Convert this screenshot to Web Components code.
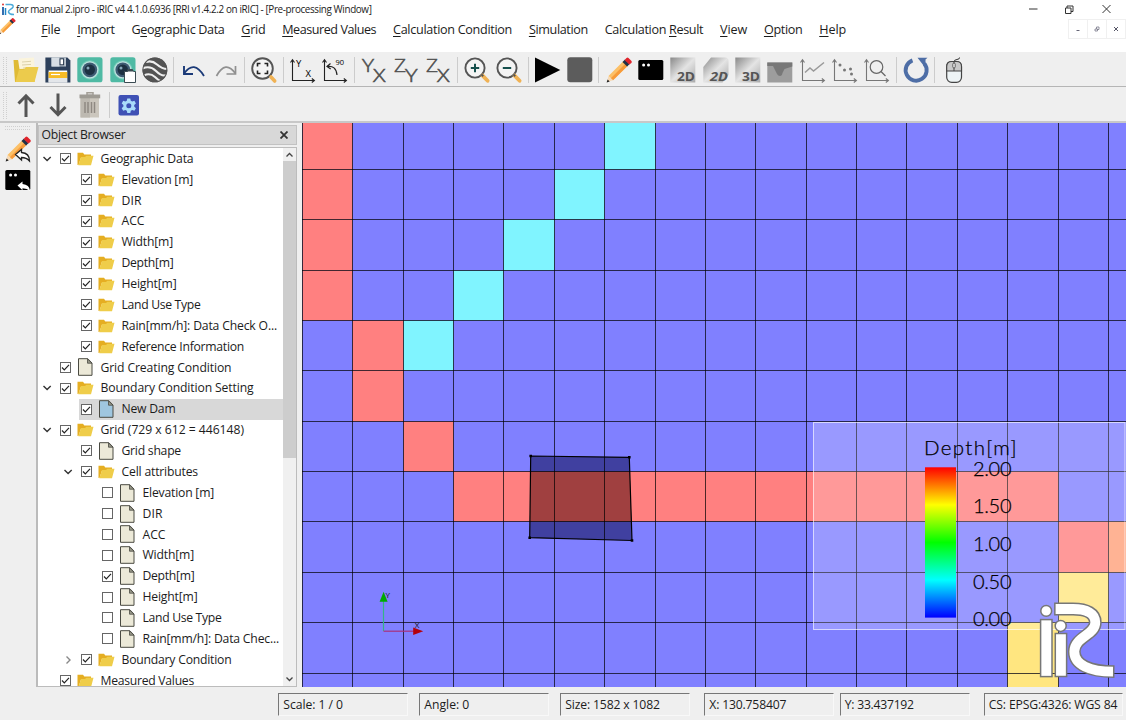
<!DOCTYPE html>
<html lang="en"><head><meta charset="utf-8"><title>iRIC</title>
<style>
html,body{margin:0;height:100%;overflow:hidden;background:#efefef}
body{font-family:"Open Sans","Noto Sans",sans-serif;font-size:12.4px;color:#1c1c1c}
</style></head><body>
<iric-app></iric-app>
<script>
const def=(name,html,extra)=>customElements.define(name,class extends HTMLElement{
  connectedCallback(){
    if(this.shadowRoot)return;
    const t=document.createElement('template');
    t.innerHTML=typeof html==='function'?html(this):html;
    this.attachShadow({mode:'open'}).appendChild(t.content.cloneNode(true));
    if(extra)extra(this);
  }});

/* A label that tracks its letters so that it fills the width given in "w". */
def('fit-text','<style>:host{display:inline-block;white-space:pre;line-height:1.3;flex:none}</style><slot></slot>',el=>{
  const w=+el.getAttribute('w'); if(!w)return;
  const n=el.textContent.length, nat=el.getBoundingClientRect().width;
  el.style.letterSpacing=((w-nat)/n)+'px';
});

const lens='<circle cx="11" cy="11" r="9.6" fill="#f4f4f4" stroke="#555" stroke-width="1.9"/>';
const handle='<path d="M18.6 18.6l5 5.2" stroke="#f0b254" stroke-width="3.8" stroke-linecap="round"/><path d="M17.4 17.4l1.8 1.8" stroke="#555" stroke-width="2"/>';
const axes='<path d="M2.5 3v20.5H24M.5 5.5l2-2.8 2 2.8M21.8 21.5l2.6 2-2.6 2" fill="none" stroke="#777" stroke-width="1.1"/>';
const axesD=axes.replace('#777','#222');
const cam='<rect x=".3" y=".3" width="25.2" height="25" rx="2.6" fill="#4fbaa4"/><circle cx="12.8" cy="12.8" r="9.6" fill="#74ccba"/><circle cx="12.8" cy="12.8" r="8.6" fill="#bfe3df"/><circle cx="12.8" cy="12.8" r="7.4" fill="#3e5b73"/><circle cx="12.8" cy="12.8" r="5.2" fill="#1d3142"/><circle cx="11" cy="11" r="1.5" fill="#88a9ba"/>';
const pencil='<path d="M2.5 19L17.5 4l4.5 4.4L7 23.3z" fill="#fcc067"/><path d="M4.8 21.2L19.8 6.2 22 8.4 7 23.3z" fill="#f79b3a"/><path d="M2.5 19L1 25l6-1.7z" fill="#f7d9b4"/><path d="M1.6 22.4L.6 25.5l3.1-.9z" fill="#222"/><path d="M16.5 5L19 2.5l4.6 4.6L21.1 9.500z" fill="#203247"/><path d="M18.6 3L20.500 1q1-.8 2 .1l3 3q.7 1-.1 2L23.300 7.600z" fill="#e0242b"/>';
const term='<rect x=".3" y="3" width="25" height="20" rx="1.5"/><circle cx="5.6" cy="7.900" r="1.500" fill="#fff"/><circle cx="10.500" cy="7.900" r="1.500" fill="#fff"/>';
const sheen=(shape)=>'<defs><linearGradient id="g" x1="0" y1="0" x2="1" y2="1"><stop offset="0" stop-color="#888"/><stop offset=".5" stop-color="#e4e4e4"/><stop offset="1" stop-color="#a9a9a9"/></linearGradient></defs><path d="'+shape+'" fill="url(#g)"/>';
const dim=(s,st='')=>'<text x="7" y="24" font-family="Open Sans" font-weight="700" font-size="11.500" textLength="18" lengthAdjust="spacingAndGlyphs" fill="#555" '+st+'>'+s+'</text>';
const yz=(a,b)=>'<g font-family="Open Sans" font-weight="300" fill="#444" stroke="#555" stroke-width=".5"><text x="1" y="14.500" font-size="18.500" textLength="12" lengthAdjust="spacingAndGlyphs">'+a+'</text><text x="12" y="24.500" font-size="18.500" textLength="12.500" lengthAdjust="spacingAndGlyphs">'+b+'</text></g>';
const ICON={
 open:'<path d="M3 4l14-3 2.500 15-15 4z" fill="#f6ebc8"/><path d="M6 1.500l15-1 1 17H6z" fill="#fbf4dc"/><path d="M9 5l9-.7M9 8l9-.6M10 11l5-.4" stroke="#d8cda5" stroke-width=".9"/><path d="M.5 3h4.500l1.500 9 17-.5-2 13.500H2z" fill="#dfba35"/><path d="M6 12.500h5l2-2.500h12.500L21.500 25H2.500z" fill="#eccb4c"/>',
 save:'<path d="M.4.5h22l3 3V25.400H.4z" fill="#2d405b"/><path d="M6.500.5h14.500v9H6.500z" fill="#b9c2cc"/><path d="M6.500.5h8v9h-8z" fill="#d7dde3"/><rect x="15" y="1.800" width="3.600" height="6" fill="#fff" stroke="#26364c"/><path d="M3.600 13.500h18.600v11.900H3.600z" fill="#fff"/><path d="M3.600 15h18.600v6H3.600z" fill="#f7bb26"/><path d="M6 17.500h9" stroke="#fff" stroke-width="1.200"/><path d="M3.600 21h18.600v4.400H3.600z" fill="#e3e6ea"/>',
 cam, camcopy:cam+'<path d="M14.500 14.500h3l1-2h4l1 2h2v11h-11z" fill="#fff" stroke="#3b4b52" stroke-width="1"/><path d="M17 12.500h6v2h-6z" fill="#3b4b52"/>',
 earth:'<circle cx="12.900" cy="12.900" r="12.400" fill="#545454"/><g fill="none" stroke="#efefef" stroke-width="2.100"><path d="M4 5Q10 3 15 7.500T25.500 12"/><path d="M.5 11.500Q8 8 14 14t10.500 4"/><path d="M2 18.500Q8 15.500 13 20t6 3.500"/></g><circle cx="12.900" cy="12.900" r="11.900" fill="none" stroke="#545454" stroke-width="1.100"/>',
 undo:'<path d="M3 16.500Q13 2.500 23 19" fill="none" stroke="#1b3a78" stroke-width="1.800"/><path d="M3 9v8h9" fill="none" stroke="#1b3a78" stroke-width="1.900"/>',
 redo:'<path d="M22.500 16.500Q12.500 2.500 3.500 19" fill="none" stroke="#909090" stroke-width="1.700"/><path d="M22.500 9v8h-9" fill="none" stroke="#909090" stroke-width="1.700"/>',
 fit:'<circle cx="11.500" cy="11.500" r="10.300" fill="#f4f4f4" stroke="#555" stroke-width="1.900"/><path d="M6.500 9.500V6.500h3M13.500 6.500h3v3M16.500 13.500v3h-3M9.500 16.500h-3v-3" fill="none" stroke="#222" stroke-width="1.600"/><path d="M20 20l3.700 4" stroke="#f0b254" stroke-width="3.600" stroke-linecap="round"/>',
 yx:axesD+'<g font-family="Open Sans" font-size="9.500"><text x="6" y="9.500">Y</text><text x="15.500" y="19.500">X</text></g>',
 r90:axesD+'<text x="13.500" y="8" font-family="Open Sans" font-size="7.500">90</text><path d="M5 9.500q9-1.500 10 8.500M8.500 6.500L5 9.500l3.700 2.600" fill="none" stroke="#222" stroke-width="1.200"/>',
 YX:yz('Y','X'),ZY:yz('Z','Y'),ZX:yz('Z','X'),
 zin:lens+'<path d="M11 6.800v8.400M6.800 11h8.400" stroke="#16504d" stroke-width="2"/>'+handle,
 zout:lens+'<path d="M6.800 11h8.400" stroke="#16504d" stroke-width="2"/>'+handle,
 play:'<path d="M0 .5L25.300 13 0 25.500z"/>',
 stop:'<rect x=".3" y=".3" width="25" height="25" rx="3" fill="#5c5c5c"/>',
 pencil,term,
 d2:sheen('M.3.5h25v25h-25z')+dim('2D'),
 d2b:sheen('M8 .5h14q3.500 0 3.500 3.500v14l-6 7.500H.3V10z')+dim('2D','font-style="italic"'),
 d3:sheen('M.3.5h25v25h-25z')+dim('3D'),
 section:'<path d="M.3 5.500h25v20h-25z" fill="#9d9d9d"/><path d="M2 9h4l4 8q1 2 3 2t2.500-3l2-4 7.800-2.500V5.500H.3V9z" fill="#787878"/>',
 line:axes+'<path d="M5 15.500l5-4.500 3.500 3L24 5.500" fill="none" stroke="#999" stroke-width="1.500"/>',
 dots:axes+'<g fill="#777"><circle cx="8" cy="8" r="1.500"/><circle cx="12.500" cy="13" r="1.500"/><circle cx="18.500" cy="12" r="1.500"/><circle cx="19.500" cy="17" r="1.500"/></g>',
 mag:axes+'<circle cx="12.500" cy="10" r="6.300" fill="none" stroke="#666" stroke-width="1.200"/><path d="M17 14.500l4.500 4.500" stroke="#666" stroke-width="1.300"/>',
 refresh:'<path d="M9.500 3.300A10.500 10.500 0 1 0 21.300 6.500" fill="none" stroke="#4e6ea6" stroke-width="3.900"/><path d="M14.500.8h10l-2 1.800v8.500z" fill="#4e6ea6"/>',
 mouse:'<path d="M13 4.500Q13 3 16 2.500T18.500.5" fill="none" stroke="#333"/><rect x="5.700" y="4.500" width="14.800" height="20.800" rx="5" fill="#eef4f6" stroke="#444" stroke-width="1.200"/><path d="M5.700 14V9.500q0-5 5-5h5q4.800 0 4.800 5V14z" fill="#c9c9c9" stroke="#444" stroke-width="1.100"/><path d="M13 4.500V14" stroke="#444"/><rect x="11.800" y="6" width="2.400" height="5" rx="1.200" fill="#eee" stroke="#444" stroke-width=".8"/>',
 up:'<path d="M13 25V4M5.500 11.500L13 3.800l7.500 7.700" fill="none" stroke="#555" stroke-width="3"/>',
 down:'<path d="M13 1.500v21M5.500 15l7.500 7.700 7.500-7.700" fill="none" stroke="#555" stroke-width="3"/>',
 trash:'<path d="M10 .8h6v2.500h-6z" fill="none" stroke="#a39f97" stroke-width="1.500"/><path d="M3.500 6h18.500v19.500H3.500z" fill="#cbc6bd"/><path d="M3.500 6H13v19.500H3.500z" fill="#bdb9b1"/><path d="M2.500 2.500h20.700v3.800H2.500z" fill="#9e9b94"/><path d="M8 10v11M11 10v11M14.500 10v11M17.500 10v11" stroke="#8f8982" stroke-width="1.500"/>',
 gear:'<rect x="2.500" y="3" width="20.500" height="20.500" rx="2" fill="#3f51b5"/><path d="M11.300 6.500h3l.5 2.300 1.400.8 2.200-.8 1.500 2.600-1.700 1.600v1.600l1.700 1.600-1.500 2.500-2.200-.7-1.400.8-.5 2.200h-3l-.5-2.200-1.400-.8-2.200.7-1.500-2.500 1.700-1.600V13l-1.700-1.600 1.500-2.600 2.200.8 1.400-.8z" fill="#a9dcfa"/><circle cx="12.800" cy="13.700" r="2.500" fill="#3f51b5"/>',
 pencilback:pencil+'<path d="M10.500 18.500l6-5v3q8 .5 8 8.500-3-3.500-8-3.500v2.500z" fill="#fff" stroke="#222" stroke-width="1.300"/>',
 termback:term+'<path d="M12.500 18.500l5-4v2.500q7 .5 7.500 7-3-2.700-7.500-2.700v2z" fill="#fff"/>'
};
def('tool-icon',el=>`<style>:host{display:block;flex:none;width:32.35px;height:26px}svg{display:block;overflow:visible}</style><svg width="26" height="26" viewBox="0 0 26 26">${ICON[el.getAttribute('name')]}</svg>`);

def('tool-bar',el=>`<style>:host{display:flex;align-items:flex-start;box-sizing:border-box;padding-left:3px;background:#efefef}
i{flex:none;width:5.150px;height:26px;margin-left:-1px;margin-right:1px;border-left:1px solid #ccc}
b{flex:none;width:2px;height:27px;margin-right:5.700px;border:dotted #cfcfcf;border-width:0 1px}</style><b></b>`+
 el.getAttribute('items').split(' ').map(n=>n==='|'?'<i></i>':`<tool-icon name="${n}"></tool-icon>`).join(''));

def('title-bar',`<style>:host{display:flex;height:19px;background:#fff;align-items:center;font-size:9.900px;padding-left:2px;color:#222}
svg{flex:none}.logo{margin-right:2px}.win{margin-left:auto;margin-right:14px}</style>
<svg class="logo" width="12" height="13" viewBox="0 0 12 13"><path d="M1 4v8" stroke="#1e5fa8" stroke-width="1.800"/><circle cx="1" cy="1.500" r="1" fill="#d33"/><path d="M3.500 5v7" stroke="#1d86c8" stroke-width="1.500"/><path d="M3.500 1.500h5q3 0 2.500 2.500c-.5 2-5 2.500-4.500 5q.5 2.500 5.500 2.500" fill="none" stroke="#4aa9d8" stroke-width="1.500"/></svg>
<fit-text w="355.500">for manual 2.ipro - iRIC v4 4.1.0.6936 [RRI v1.4.2.2 on iRIC] - [Pre-processing Window]</fit-text>
<svg class="win" width="83" height="10" viewBox="0 0 83 10" fill="none" stroke="#333" stroke-width="1"><path d="M0 4h8.500M36.500 3H42v5.500h-5.500zM38 3V1h6v5.500h-2M73.500 0l8 8M81.500 0l-8 8"/></svg>`);

def('menu-bar',el=>{
 const m=[['<u>F</u>ile',19],['<u>I</u>mport',37.500],['G<u>e</u>ographic Data',93],['<u>G</u>rid',24],['<u>M</u>easured Values',94],['<u>C</u>alculation Condition',119],['<u>S</u>imulation',59],['Calculation <u>R</u>esult',98.500],['<u>V</u>iew',27],['<u>O</u>ption',38.500],['<u>H</u>elp',27]];
 return `<style>:host{display:flex;height:33px;background:#fff}
 .items{display:flex;gap:16.850px;margin-left:24.300px;padding-top:3px;font-size:12.600px}u{text-underline-offset:2px;text-decoration-thickness:1px}
 svg{flex:none}.mdi{display:flex;margin-left:auto;height:20px}.mdi span{width:18px;height:18px;border:1px solid #f0f0f0;margin-left:-1px;display:grid;place-items:center}</style>
 <svg width="17" height="18" viewBox="0 9 26 26" overflow="visible"><g transform="translate(-2 6)">${pencil}</g></svg>
 <div class="items">${m.map(a=>`<fit-text w="${a[1]}">${a[0]}</fit-text>`).join('')}</div>
 <div class="mdi"><span><svg width="6" height="6"><path d="M1.500 4.500h3" stroke="#667"/></svg></span><span><svg width="6" height="6" fill="none" stroke="#778" stroke-width=".8"><path d="M1 3h2.500v2H1zM2.500 3V1H5v2.500H3.500"/></svg></span><span><svg width="6" height="6"><path d="M1 1l4 4M5 1L1 5" stroke="#556"/></svg></span></div>`;});

const folder='<svg width="17" height="14" viewBox="0 0 17 14"><path d="M.5.800h5.500l1.300 1.700H14v3H4L1.500 13H.5z" fill="#e5ae22"/><path d="M4 5h4l1.300-1.300H16.500L14 13.300H1.300z" fill="#efcd4a"/></svg>';
const page=c=>`<svg width="17" height="18" viewBox="0 0 17 18"><path d="M1.500.700h9.300L15 5v12.300H1.500z" fill="${c}" stroke="#4a4a42"/><path d="M10.500 1v4.200H15z" fill="#9b9b8c" stroke="#4a4a42" stroke-width=".8"/></svg>`;
/* One line of the object tree. Attributes: level, icon, w, open, checked, selected. */
def('tree-row',el=>{
 const l=+el.getAttribute('level'),ic=el.getAttribute('icon'),o=el.getAttribute('open');
 return `<style>:host{display:flex;align-items:center;flex:none;height:20.880px;padding-left:${3.6+21*l}px;box-sizing:border-box;font-size:12.200px;${el.hasAttribute('selected')?'background:linear-gradient(90deg,transparent 41px,#d8d8d8 41px)':''}}
 .a{width:19.400px;display:flex}.c{flex:none;width:9px;height:9px;border:1px solid #666;background:#fff;margin-right:6px}.c svg,.a svg,.i svg{display:block}.i{width:23px;flex:none;display:flex;align-items:center;height:18px}</style>
 <span class="a">${o?`<svg width="12" height="10" viewBox="0 0 12 10"><path d="${o==='y'?'M2.500 3l3.600 3.600L9.700 3':'M4.500 1.500L8 5 4.500 8.500'}" fill="none" stroke="${o==='y'?'#333':'#888'}" stroke-width="1.400"/></svg>`:''}</span>
 <span class="c">${el.hasAttribute('checked')?'<svg width="9" height="9"><path d="M1 4.500l2.300 2.300L8 1.800" fill="none" stroke="#222" stroke-width="1.200"/></svg>':''}</span>
 <span class="i">${ic==='f'?folder:page(ic==='b'?'#9fc6df':'#ece9d8')}</span><fit-text w="${el.getAttribute('w')}">${el.getAttribute('text')}</fit-text>`;});

def('object-browser',el=>{
 const R=[[0,'f','Geographic Data',93,'y',1],[1,'f','Elevation [m]',71.500,'',1],[1,'f','DIR',20,'',1],[1,'f','ACC',23,'',1],[1,'f','Width[m]',51.500,'',1],[1,'f','Depth[m]',52,'',1],[1,'f','Height[m]',55,'',1],[1,'f','Land Use Type',79,'',1],[1,'f','Rain[mm/h]: Data Check O...',155.500,'',1],[1,'f','Reference Information',122.500,'',1],[0,'p','Grid Creating Condition',131,'',1],[0,'f','Boundary Condition Setting',153,'y',1],[1,'b','New Dam',54,'',1,1],[0,'f','Grid (729 x 612 = 446148)',143.500,'y',1],[1,'p','Grid shape',59.500,'',1],[1,'f','Cell attributes',76.500,'y',1],[2,'p','Elevation [m]',71.500,'',0],[2,'p','DIR',20,'',0],[2,'p','ACC',23,'',0],[2,'p','Width[m]',51.500,'',0],[2,'p','Depth[m]',52,'',1],[2,'p','Height[m]',55,'',0],[2,'p','Land Use Type',79,'',0],[2,'p','Rain[mm/h]: Data Chec...',136.500,'',0],[1,'f','Boundary Condition',110,'n',1],[0,'f','Measured Values',93.500,'',1]];
 return `<style>:host{display:flex;flex-direction:column;width:261px;box-sizing:border-box;border-left:2px solid #bbb;font-size:12.200px}
 header{height:20px;margin-top:1.500px;box-sizing:border-box;display:flex;align-items:center;justify-content:space-between;background:#d8d8d8;border:1px solid #c2c2c2;padding:1.500px 8px 0 3px;color:#222}
 .box{flex:1;min-height:0;margin-top:2.500px;display:flex;background:#fff;border:1px solid #bcbcbc;border-left:0}
 .tree{flex:1;min-width:0;overflow:hidden;display:flex;flex-direction:column;padding-top:.3px}
 .bar{width:13px;background:#f0f0f0;display:flex;flex-direction:column;align-items:center}.bar svg{flex:none}.thumb{width:13px;height:297px;background:#cdcdcd;margin-bottom:auto}</style>
 <header><fit-text w="84">Object Browser</fit-text><svg width="8" height="8"><path d="M.5.5l7 7M7.500.5l-7 7" stroke="#333" stroke-width="1.800"/></svg></header>
 <div class="box"><div class="tree">${R.map(r=>`<tree-row level="${r[0]}" icon="${r[1]}" text="${r[2]}" w="${r[3]}" open="${r[4]}" ${r[5]?'checked':''} ${r[6]?'selected':''}></tree-row>`).join('')}</div>
 <div class="bar"><svg width="13" height="13"><path d="M3.500 8.500l3-3 3 3" fill="none" stroke="#444" stroke-width="1.300"/></svg><div class="thumb"></div><svg width="13" height="14"><path d="M3.500 5.500l3 3 3-3" fill="none" stroke="#444" stroke-width="1.300"/></svg></div></div>`;});

/* Map canvas: user units are window pixels, so the view box begins at the canvas corner. */
def('map-view',el=>{
 const snap=v=>Math.round(v-.5)+.5;
 const X=i=>snap(302.400+50.380*i),Y=j=>snap(119+50.370*j);
 let cells='',lines='';
 const put=(c,r,f,n=1)=>cells+=`<rect x="${X(c)}" y="${Y(r)}" width="${X(c+n)-X(c)}" height="${Y(r+1)-Y(r)}" fill="${f}"/>`;
 const red='#ff8080',cy='#80f4ff',ye='#ffe680';
 for(let r=0;r<4;r++)put(0,r,red);
 put(1,4,red);put(1,5,red);put(2,6,red);put(3,7,red,12);put(15,8,red);put(16,8,'#ffa07a');put(15,9,ye);put(14,10,ye);put(14,11,ye);
 [[6,0],[5,1],[4,2],[3,3],[2,4]].forEach(p=>put(p[0],p[1],cy));
 for(let i=0;i<17;i++)lines+=`M${X(i)} 123V687`;
 for(let j=1;j<12;j++)lines+=`M301 ${Y(j)}H1126`;
 const quad='M530.700 456l98.600 1.300L632 540.500l-102.300-2.800z';
 return `<style>:host{display:block;overflow:hidden}svg{display:block}</style>
 <svg width="824" height="564" viewBox="302 123 824 564"><defs><clipPath id="q"><path d="${quad}"/></clipPath><linearGradient id="j" x1="0" y1="0" x2="0" y2="1"><stop offset="0" stop-color="red"/><stop offset=".25" stop-color="#ff0"/><stop offset=".5" stop-color="#0f0"/><stop offset=".75" stop-color="#0ff"/><stop offset="1" stop-color="#00f"/></linearGradient></defs>
 <rect x="301" y="120" width="826" height="570" fill="#8080ff"/>${cells}
 <g clip-path="url(#q)"><rect x="525" y="450" width="110" height="95" fill="#4040a0"/><rect x="525" y="${Y(7)}" width="110" height="${Y(8)-Y(7)}" fill="#a04040"/></g>
 <path d="${lines}" stroke="#000" stroke-opacity=".7" stroke-width="1" fill="none"/>
 <path d="${quad}" fill="none" stroke="#000" stroke-width="1.200"/>
 <path d="M529.400 454.700h2.600v2.600h-2.600zM628 456h2.600v2.600H628zM630.700 539.200h2.600v2.600h-2.600zM528.400 536.400h2.600v2.600h-2.600z"/>
 <path d="M383.500 631V601" stroke="#35b585" stroke-width="1.200"/><path d="M379.600 601.700l4-10 4 10z" fill="#0a0"/><path d="M383.500 631.200H414" stroke="#a8307c" stroke-width="1.200"/><path d="M413.200 627.500v7.500l10-3.700z" fill="#b4000c"/>
 <g font-family="Open Sans" font-size="8" fill="#111"><text x="385.500" y="597.800">Y</text><text x="414.800" y="627.500">X</text></g>
 <rect x="813.500" y="422.500" width="311.500" height="207" fill="#fff" fill-opacity=".2" stroke="#fff" stroke-opacity=".65"/>
 <rect x="925" y="467.300" width="31" height="150.300" fill="url(#j)"/>
 <g font-family="Lato" font-weight="300" fill="#000" stroke="#000" stroke-width=".25" font-size="20"><text x="924" y="455" font-size="20.500" textLength="92.500">Depth[m]</text>
 ${['2.00','1.50','1.00','0.50','0.00'].map((t,i)=>`<text x="973" y="${475.800+37.600*i}" textLength="38.500">${t}</text>`).join('')}</g>
 <g fill="#fff" stroke="#777" stroke-width="1.500"><rect x="1040.600" y="619.600" width="11.400" height="57"/><rect x="1055.300" y="633.500" width="11.300" height="43"/><circle cx="1046.200" cy="610.900" r="5.400"/></g>
 <g fill="none"><path d="M1054.100 609H1073C1087 609 1095.300 613.500 1095.300 622.500C1095.300 635 1074.300 637 1074.300 651.500C1074.300 665 1090 671.500 1114.500 671.700" stroke="#777" stroke-width="12.800"/><path d="M1055.600 609H1073C1087 609 1095.300 613.500 1095.300 622.500C1095.300 635 1074.300 637 1074.300 651.500C1074.300 665 1090 671.500 1113 671.700" stroke="#fff" stroke-width="9.800"/></g><circle cx="1060.700" cy="625.900" r="5.500" fill="#fff" stroke="#777" stroke-width="1.500"/></svg>`;});

def('status-bar',el=>{
 const f=[['Scale: 1 / 0',59.500,130,11],['Angle: 0',45,130,11],['Size: 1582 x 1082',94.500,130,14],['X: 130.758407',77,130,5.500],['Y: 33.437192',69,130,14],['CS: EPSG:4326: WGS 84',128.500,139,0]];
 return `<style>:host{display:flex;height:33px;box-sizing:border-box;padding:6px 0 0 278px;background:#efefef}
 div{flex:none;box-sizing:border-box;height:23px;border:1px solid #f8f8f8;border-top-color:#777;border-left-color:#777;padding:1.500px 0 0 4.300px;display:flex;align-items:center;font-size:12.200px}</style>
 ${f.map(a=>`<div style="width:${a[2]}px;margin-right:${a[3]}px"><fit-text w="${a[1]}">${a[0]}</fit-text></div>`).join('')}`;});

def('iric-app',`<style>:host{display:flex;flex-direction:column;width:1126px;height:720px;overflow:hidden;background:#efefef}
.one{height:35px;padding-top:5px;border-bottom:1px solid #b5b5b5}.two{height:36px;padding-top:5px;border-bottom:2px solid #c8c8c8}
main{display:flex;height:564px}
.side{width:35.500px;flex:none;box-sizing:border-box;padding:3px 0 0 5px;display:flex;flex-direction:column;gap:5.500px}
.side i{width:25px;height:2px;border:dotted #cfcfcf;border-width:1px 0}
object-browser{flex:none}map-view{flex:none;width:824px;margin-left:auto}</style>
<title-bar></title-bar><menu-bar></menu-bar>
<tool-bar class="one" items="open save cam camcopy earth | undo redo | fit | yx r90 | YX ZY ZX | zin zout | play stop | pencil term d2 d2b d3 section line dots mag | refresh | mouse"></tool-bar>
<tool-bar class="two" items="up down trash | gear"></tool-bar>
<main><div class="side"><i></i><tool-icon name="pencilback"></tool-icon><tool-icon name="termback"></tool-icon></div><object-browser></object-browser><map-view></map-view></main>
<status-bar></status-bar>`);
</script></body></html>
